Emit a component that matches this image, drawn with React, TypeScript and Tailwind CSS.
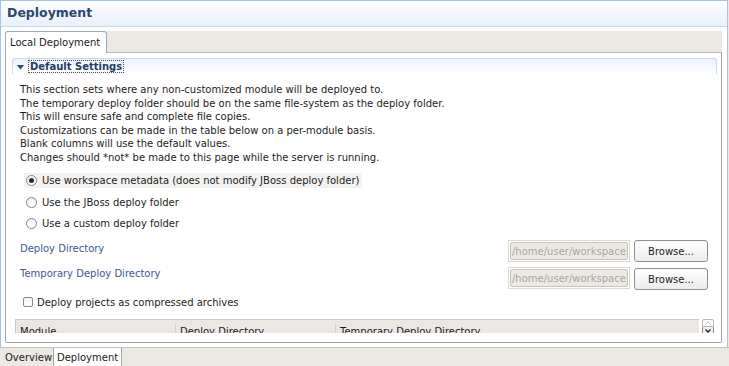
const descLines = [
  "This section sets where any non-customized module will be deployed to.",
  "The temporary deploy folder should be on the same file-system as the deploy folder.",
  "This will ensure safe and complete file copies.",
  "Customizations can be made in the table below on a per-module basis.",
  "Blank columns will use the default values.",
  "Changes should *not* be made to this page while the server is running.",
];

const radios = [
  { label: "Use workspace metadata (does not modify JBoss deploy folder)", checked: true },
  { label: "Use the JBoss deploy folder", checked: false },
  { label: "Use a custom deploy folder", checked: false },
];

function Radio({ checked }: { checked: boolean }) {
  return (
    <span className="flex h-[11px] w-[11px] shrink-0 items-center justify-center rounded-full border border-[#858585] bg-gradient-to-b from-[#f4f4f4] to-white">
      {checked && <span className="h-[5px] w-[5px] rounded-full bg-[#2b2b2b]" />}
    </span>
  );
}

function PathField() {
  return (
    <div className="h-[22px] w-[122px] shrink-0 border border-[#dcd8d2] p-[1px]">
      <div className="flex h-full items-center overflow-hidden whitespace-nowrap rounded-[2px] border border-[#cbc3b7] bg-[#ece9e5] pl-[1px] text-[#aaa59e]">
        /home/user/workspace
      </div>
    </div>
  );
}

function BrowseButton({ className = "" }: { className?: string }) {
  return (
    <button
      className={`ml-[4px] flex h-[22px] w-[74px] shrink-0 items-center justify-center rounded-[3px] border border-[#8f8f8f] bg-gradient-to-b from-white to-[#ececec] text-[#1e1e1e] ${className}`}
    >
      Browse...
    </button>
  );
}

export default function App() {
  return (
    <div className="flex h-[366px] w-[729px] flex-col overflow-hidden bg-[#ece9e5] font-['DejaVu_Sans',sans-serif] text-[10px] leading-[13px] text-[#1c1c1c]">
      {/* editor page */}
      <div className="flex h-[347px] w-[728px] shrink-0 flex-col border-x border-t border-[#a3c3e8] bg-white">
        <div className="flex h-[26px] shrink-0 items-center border-b border-[#c6d8ee] bg-gradient-to-b from-white to-[#e8f0fa] pl-[6px]">
          <h1 className="text-[12.5px] font-bold leading-none text-[#2a4770]">Deployment</h1>
        </div>

        <div className="ml-[4px] mr-[5px] mt-[4px] flex flex-col">
          {/* tab strip */}
          <div className="flex h-[22px]">
            <div className="flex w-[102px] items-center rounded-t-[3px] border border-b-0 border-[#98a9bf] bg-white pl-[4px]">
              Local Deployment
            </div>
            <div className="flex-1 border-b border-[#bcb8b2] bg-[#ece9e5]" />
          </div>

          {/* tab panel */}
          <div className="h-[290px] rounded-b-[2px] border border-t-0 border-[#a3a3a3] bg-white pl-[6px] pr-[4px] pt-[5px]">
            {/* section title */}
            <div className="flex h-[16px] items-center rounded-t-[3px] border border-b-0 border-[#c8d8f0] bg-gradient-to-b from-[#edf3fc] to-white pl-[4px]">
              <svg width="7" height="5" viewBox="0 0 7 5" className="mt-[1px]">
                <path d="M0 0 H7 L3.5 4.5 Z" fill="#2a4a75" />
              </svg>
              <span className="ml-[4px] border border-dotted border-[#4a4a4a] px-[1px] text-[10px] font-bold leading-[11px] text-[#1f3d66]">
                Default Settings
              </span>
            </div>

            {/* section body, clipped */}
            <div className="h-[259px] overflow-hidden pl-[8px] pr-[3px]">
              <div className="mt-[9px] leading-[13.5px]">
                {descLines.map((l) => (
                  <p key={l} className="whitespace-nowrap">{l}</p>
                ))}
              </div>

              <div className="mt-[6px] flex flex-col pl-[4px]">
                {radios.map((r) => (
                  <div key={r.label} className="flex h-[21.5px] items-center">
                    <div
                      className={`flex h-[15px] items-center gap-[5px] pl-[2px] pr-[3px] ${r.checked ? "bg-[#f3f2f0]" : ""}`}
                    >
                      <Radio checked={r.checked} />
                      <span className="whitespace-nowrap">{r.label}</span>
                    </div>
                  </div>
                ))}
              </div>

              <div className="mt-[5.5px] flex flex-col pr-[6px]">
                <div className="flex items-start">
                  <span className="flex-1 pt-[2px] text-[#3a5b8c]">Deploy Directory</span>
                  <PathField />
                  <BrowseButton />
                </div>
                <div className="mt-[5px] flex items-start">
                  <span className="flex-1 pt-0 text-[#3a5b8c]">Temporary Deploy Directory</span>
                  <PathField />
                  <BrowseButton className="mt-[1px]" />
                </div>
              </div>

              <div className="mt-[5px] flex h-[14px] items-center pl-[3px]">
                <span className="h-[10px] w-[10px] shrink-0 rounded-[2px] border border-[#8a8a8a] bg-gradient-to-b from-[#f3f3f3] to-white" />
                <span className="ml-[4px] whitespace-nowrap">Deploy projects as compressed archives</span>
              </div>

              {/* module table */}
              <div className="-ml-[5px] mt-[10px] flex">
                <div className="flex h-[22px] flex-1 border-l border-t border-[#cdc8c0] bg-[#ebe8e3]">
                  <div className="flex w-[160px] items-start justify-between">
                    <span className="pl-[4px] pt-[5px]">Module</span>
                    <span className="mt-[4px] h-full w-px bg-[#d3cec7]" />
                  </div>
                  <div className="flex w-[160px] items-start justify-between">
                    <span className="pl-[4px] pt-[5px]">Deploy Directory</span>
                    <span className="mt-[4px] h-full w-px bg-[#d3cec7]" />
                  </div>
                  <div className="flex-1 pl-[4px] pt-[5px]">Temporary Deploy Directory</div>
                </div>
                <div className="ml-[3px] flex w-[12px] flex-col">
                  <div className="flex h-[8px] items-center justify-center rounded-t-[2px] border border-[#b8b8b8] bg-white">
                    <svg width="6" height="4" viewBox="0 0 6 4">
                      <path d="M0.5 3.5 L3 1 L5.5 3.5" stroke="#b5b5b5" strokeWidth="1" fill="none" />
                    </svg>
                  </div>
                  <div className="flex h-[8px] items-center justify-center border border-t-0 border-[#8c8c8c] bg-[#f1f1f1]">
                    <svg width="6" height="4" viewBox="0 0 6 4">
                      <path d="M0.5 0.5 L3 3 L5.5 0.5" stroke="#1e1e1e" strokeWidth="1.3" fill="none" />
                    </svg>
                  </div>
                </div>
              </div>
            </div>
          </div>
        </div>
      </div>

      {/* editor page tabs */}
      <div className="flex h-[19px] shrink-0 border-t border-[#c4beb4] bg-[#ece9e5]">
        <div className="flex w-[53px] items-center pl-[5px]">Overview</div>
        <div className="flex items-center border-x border-[#a9a49b] bg-white pl-[3px] pr-[3px]">Deployment</div>
      </div>
    </div>
  );
}
